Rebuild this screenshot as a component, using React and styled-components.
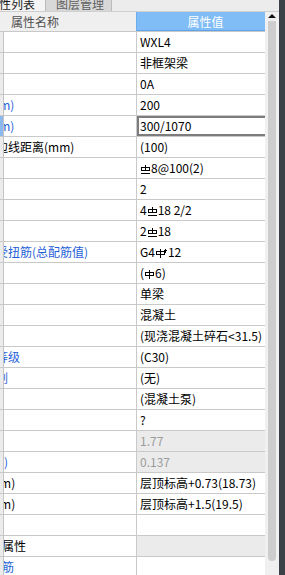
import React from "react";
import styled, { createGlobalStyle } from "styled-components";

const GlobalStyle = createGlobalStyle`
  html, body {
    margin: 0;
    padding: 0;
    background: #fff;
    overflow: hidden;
  }
  body {
    font-family: "Noto Sans CJK SC", "Noto Sans", sans-serif;
    font-size: 12px;
    color: #000;
  }
`;

const Frame = styled.div`
  display: flex;
  width: 285px;
  height: 575px;
  overflow: hidden;
`;

const Main = styled.div`
  flex: 1;
  display: flex;
  flex-direction: column;
  min-width: 0;
`;

const Edge = styled.div`
  width: 6px;
  background: #3b4046;
`;

const TabBar = styled.div`
  height: 11px;
  display: flex;
  background: #ececec;
  border-bottom: 1px solid #cfcfcf;
  flex-shrink: 0;
`;

const Tab = styled.div`
  height: 11px;
  width: ${(p) => p.$width}px;
  display: flex;
  align-items: flex-end;
  overflow: hidden;
  white-space: nowrap;
  background: ${(p) => (p.$active ? "#f4f4f4" : "#d8d8d8")};
  color: ${(p) => (p.$active ? "#1a1a1a" : "#5e5e5e")};
  border-right: 1px solid #bcbcbc;
  padding-left: ${(p) => p.$pad || 0}px;
  box-sizing: border-box;
  line-height: 14px;

  span {
    margin-left: ${(p) => p.$shift || 0}px;
  }
`;

const Body = styled.div`
  flex: 1;
  display: flex;
  min-height: 0;
`;

const Grid = styled.div`
  flex: 1;
  display: flex;
  flex-direction: column;
  overflow: hidden;
  min-width: 0;
`;

const Header = styled.div`
  display: flex;
  height: 19px;
  line-height: 19px;
  border-bottom: 1px solid #c8c8c8;
  flex-shrink: 0;
`;

const HeadName = styled.div`
  width: 136px;
  padding-left: 11px;
  box-sizing: border-box;
  background: #efefef;
  color: #4f4f4f;
`;

const HeadValue = styled.div`
  flex: 1;
  background: #80bcf6;
  color: #fff;
  text-align: center;
  padding-left: 10px;
  box-shadow: inset 1px 0 0 #6aaef0, inset 0 -1px 0 #5fa3ea;
`;

const Row = styled.div`
  display: flex;
  height: 20px;
  line-height: 20px;
  border-bottom: 1px solid #c9c9c9;
  flex-shrink: 0;
`;

const Strip = styled.div`
  width: 3px;
  background: ${(p) => (p.$selected ? "#8bb9ee" : "#ececec")};
  border-right: 1px solid #c4c4c4;
`;

const LabelCell = styled.div`
  width: 132px;
  overflow: hidden;
  white-space: nowrap;
  border-right: 1px solid #c9c9c9;
`;

const LabelText = styled.span`
  display: block;
  margin-left: ${(p) => -68 + p.$shift}px;
  color: ${(p) => (p.$blue ? "#1f5fd8" : "#000")};
`;

const ValueCell = styled.div`
  flex: 1;
  padding-left: 3px;
  white-space: nowrap;
  overflow: hidden;
  background: ${(p) => (p.$muted || p.$shaded ? "#ebebeb" : "#fff")};
  color: ${(p) => (p.$muted ? "#9b9b9b" : "#000")};
  box-shadow: ${(p) =>
    p.$selected ? "inset 2px 2px 0 #7d7d7d, inset 0 -2px 0 #7d7d7d" : "none"};
`;

const Track = styled.div`
  width: 14px;
  background: #f0f0f0;
  display: flex;
  flex-direction: column;
  align-items: center;
  padding-top: 2px;
`;

const Arrow = styled.div`
  width: 0;
  height: 0;
  border-left: 4px solid transparent;
  border-right: 4px solid transparent;
  border-bottom: 4px solid #111;
`;

const Thumb = styled.div`
  width: 8px;
  height: 540px;
  margin-top: 3px;
  margin-right: 1px;
  background: #cdcdcd;
  border-radius: 1px 1px 4px 4px;
`;

const Mark = styled.svg`
  width: ${(p) => p.$w}px;
  height: 9px;
  margin: 0 1px;
  vertical-align: -1px;
`;

// rebar grade symbols: a = HPB300, c = HRB400, e = HRB400E
const Rebar = ({ grade }) => {
  const w = grade === "e" ? 11 : 9;
  return (
    <Mark $w={w} viewBox={`0 0 ${w} 9`} fill="none" stroke="#000" strokeWidth="1">
      <path d={grade === "c" ? "M4.5 0V5.5" : "M4.5 0V9"} />
      <rect x="0.5" y="2.5" width="8" height="3" />
      {grade === "c" && <path d="M0 8.5H9" />}
      {grade === "e" && <path d="M9.5 0V4M8 1.5H11" />}
    </Mark>
  );
};

const rows = [
  { label: "名称", value: "WXL4" },
  { label: "结构类别", value: "非框架梁" },
  { label: "跨数量", value: "0A" },
  { label: "截面宽度(mm)", value: "200", blue: true },
  { label: "截面高度(mm)", value: "300/1070", blue: true, selected: true },
  { label: "轴线距梁左边线距离(mm)", value: "(100)" },
  { label: "箍筋", value: <><Rebar grade="c" />8@100(2)</> },
  { label: "肢数", value: "2" },
  { label: "上部通长筋", value: <>4<Rebar grade="c" />18 2/2</> },
  { label: "下部通长筋", value: <>2<Rebar grade="c" />18</> },
  { label: "侧面构造或受扭筋(总配筋值)", value: <>G4<Rebar grade="e" />12</>, blue: true },
  { label: "拉筋", value: <>(<Rebar grade="a" />6)</> },
  { label: "定额类别", value: "单梁" },
  { label: "材质", value: "混凝土" },
  { label: "混凝土类型", value: "(现浇混凝土碎石<31.5)" },
  { label: "混凝土强度等级", value: "(C30)", blue: true },
  { label: "混凝土外加剂", value: "(无)", blue: true },
  { label: "泵送类型", value: "(混凝土泵)" },
  { label: "泵送高度(m)", value: "?" },
  { label: "截面周长(m)", value: "1.77", muted: true },
  { label: "截面面积(m²)", value: "0.137", muted: true, blue: true },
  { label: "起点顶标高(m)", value: "层顶标高+0.73(18.73)" },
  { label: "终点顶标高(m)", value: "层顶标高+1.5(19.5)" },
  { label: "备注", value: "" },
  { label: "钢筋业务属性", value: "", group: true, shift: 18 },
  { label: "其它钢筋", value: "", blue: true, shift: 30 },
];

const App = () => {
  return (
    <Frame>
      <GlobalStyle />
      <Main>
        <TabBar>
          <Tab $active $width={46} $shift={-13}>
            <span>属性列表</span>
          </Tab>
          <Tab $width={66} $pad={10}>
            <span>图层管理</span>
          </Tab>
        </TabBar>
        <Body>
          <Grid>
            <Header>
              <HeadName>属性名称</HeadName>
              <HeadValue>属性值</HeadValue>
            </Header>
            {rows.map((r, i) => (
              <Row key={i}>
                <Strip $selected={r.selected} />
                <LabelCell>
                  <LabelText $shift={r.shift || 0} $blue={r.blue}>
                    {r.label}
                  </LabelText>
                </LabelCell>
                <ValueCell $muted={r.muted} $shaded={r.group} $selected={r.selected}>
                  {r.value}
                </ValueCell>
              </Row>
            ))}
          </Grid>
          <Track>
            <Arrow />
            <Thumb />
          </Track>
        </Body>
      </Main>
      <Edge />
    </Frame>
  );
};

export default App;
